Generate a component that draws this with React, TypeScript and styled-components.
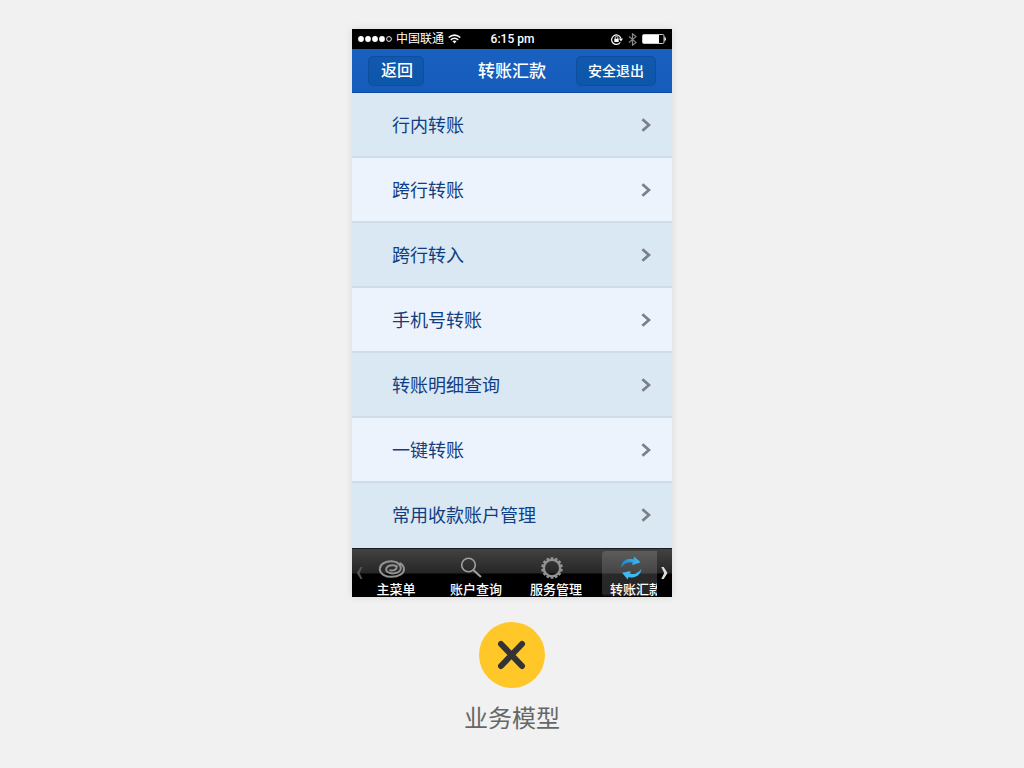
import React from "react";
import styled, { createGlobalStyle } from "styled-components";

const GlobalStyle = createGlobalStyle`
  * { box-sizing: border-box; }
  body {
    margin: 0;
    background: #f1f1f1;
    font-family: "Liberation Sans", "Noto Sans CJK SC", sans-serif;
  }
  button { font-family: inherit; border: 0; padding: 0; background: none; cursor: pointer; }
  svg { display: block; flex: none; }
`;

const Page = styled.main`
  min-height: 100vh;
  display: flex;
  flex-direction: column;
  align-items: center;
  padding: 29px 16px 24px;
`;

const Phone = styled.section`
  width: 100%;
  max-width: 320px;
  box-shadow: 0 0 8px rgba(0, 0, 0, 0.1);
`;

const StatusBar = styled.div`
  display: grid;
  grid-template-columns: 1fr auto 1fr;
  align-items: center;
  height: 20px;
  padding: 0 5px 0 6px;
  background: #000;
  color: #fff;
  font-size: 12px;
  line-height: 20px;
`;

const StatusGroup = styled.div<{ $end?: boolean }>`
  display: flex;
  align-items: center;
  gap: ${(p) => (p.$end ? "5px" : "4px")};
  justify-content: ${(p) => (p.$end ? "flex-end" : "flex-start")};
`;

const Clock = styled.time`
  font-family: Roboto, "Liberation Sans", sans-serif;
  font-weight: 500;
`;

const NavBar = styled.header`
  display: grid;
  grid-template-columns: 1fr auto 1fr;
  align-items: center;
  height: 44px;
  padding: 0 16px;
  background: linear-gradient(#1961c0, #155bbb);
  border-bottom: 1px solid #104a9c;
`;

const NavButton = styled.button<{ $end?: boolean }>`
  justify-self: ${(p) => (p.$end ? "end" : "start")};
  height: 30px;
  padding: 0 ${(p) => (p.$end ? "11px" : "10px")} 0 ${(p) => (p.$end ? "11px" : "12px")};
  border: 1px solid #0f4d9e;
  border-radius: 5px;
  background: linear-gradient(#1159b0, #0c57a8);
  color: #fff;
  font-size: ${(p) => (p.$end ? "14px" : "16px")};
  font-weight: 500;
  line-height: 28px;
`;

const Title = styled.h1`
  margin: 0;
  padding-top: 3px;
  color: #fff;
  font-size: 17px;
  font-weight: 500;
  line-height: 24px;
`;

const List = styled.ul`
  margin: 0;
  padding: 0;
  list-style: none;
`;

const Item = styled.li`
  background: #dae8f4;
  border-bottom: 2px solid #cfdcea;
  &:nth-child(even) { background: #ecf3fd; }
  &:last-child { border-bottom-color: #dae8f4; }
`;

const ItemButton = styled.button`
  display: flex;
  align-items: center;
  justify-content: space-between;
  width: 100%;
  height: 63px;
  padding: 0 21px 0 40px;
  color: #103e80;
  font-size: 18px;
  line-height: 24px;
`;

const ItemLabel = styled.span`
  padding-top: 2px;
`;

const TabBar = styled.nav`
  display: flex;
  height: 49px;
  border-top: 1px solid #1c1c1c;
  background: linear-gradient(#424242, #262626 24px, #000 25px, #000);
`;

const TabArrow = styled.button<{ $dim?: boolean }>`
  display: flex;
  align-items: center;
  justify-content: center;
  flex: none;
  width: 15px;
  color: ${(p) => (p.$dim ? "#555" : "#ddd")};
`;

const TabTrack = styled.div`
  display: flex;
  flex: 1;
  min-width: 0;
  gap: 12px;
  margin-left: -5px;
  overflow: hidden;
`;

const Tab = styled.button<{ $active?: boolean }>`
  display: flex;
  flex: none;
  flex-direction: column;
  align-items: center;
  width: 68px;
  margin-top: 2px;
  border-radius: 4px;
  color: #fff;
  font-size: 13px;
  font-weight: 500;
  line-height: 14px;
  white-space: nowrap;
  background: ${(p) => (p.$active ? "linear-gradient(#5c5c5c, #454545 22px, #292929 23px, #262626 43px, #000 46px)" : "none")};
`;

const TabIcon = styled.span`
  display: flex;
  align-items: center;
  height: 32px;
  padding: 2px 9px 0 0;
`;

const Verdict = styled.figure`
  display: flex;
  flex-direction: column;
  align-items: center;
  margin: 25px 0 0;
`;

const Badge = styled.div`
  display: flex;
  align-items: center;
  justify-content: center;
  width: 66px;
  height: 66px;
  border-radius: 50%;
  background: #ffc728;
`;

const Caption = styled.figcaption`
  margin-top: 13px;
  color: #666;
  font-size: 24px;
  line-height: 36px;
`;

const SignalIcon = () => (
  <svg width="34" height="8" viewBox="0 0 34 8" fill="#fff">
    {[3, 10, 17, 24].map((x) => <circle key={x} cx={x} cy="4" r="2.9" />)}
    <circle cx="31" cy="4" r="2.4" fill="none" stroke="#fff" strokeWidth="0.9" />
  </svg>
);

const WifiIcon = () => (
  <svg width="13" height="10" viewBox="0 0 13 10" fill="none" stroke="#fff" strokeWidth="1.6">
    <path d="M.7 3.5Q6.5-1.3 12.3 3.5M2.8 5.8Q6.5 2.7 10.2 5.8" />
    <path d="M4.5 7.3Q6.5 5.8 8.5 7.3L6.5 9.5Z" fill="#fff" stroke="none" />
  </svg>
);

const LockIcon = () => (
  <svg width="12" height="11" viewBox="0 0 12 11" fill="none" stroke="#fff">
    <path d="M9.3 8.2A4.7 4.7 0 1 1 9.8 4.2" strokeWidth="1.2" />
    <path d="M7.8 4.6h4.2L10 7.6z" fill="#fff" stroke="none" />
    <path d="M4.2 5V3.7a1.3 1.3 0 0 1 2.6 0V5" strokeWidth="0.9" />
    <path d="M3.3 4.8h4.4v3.2H3.3z" fill="#fff" stroke="none" />
  </svg>
);

const BluetoothIcon = () => (
  <svg width="9" height="13" viewBox="0 0 9 13" fill="none" stroke="#8a8a8a" strokeWidth="1.2">
    <path d="M1 3.5 8 9.4 4.5 12.2V.8L8 3.6 1 9.5" />
  </svg>
);

const BatteryIcon = () => (
  <svg width="25" height="10" viewBox="0 0 25 10">
    <rect x=".5" y=".5" width="21.5" height="9" rx="1.3" fill="none" stroke="#fff" strokeWidth=".8" />
    <path d="M1 1h16v8H1z" fill="#fff" />
    <path d="M22.5 2.5q3 2.5 0 5z" fill="#fff" />
  </svg>
);

const RowChevron = () => (
  <svg width="10" height="14" viewBox="0 0 10 14" fill="none" stroke="#7b8087" strokeWidth="2.8">
    <path d="M1.4 1.2 8 7 1.4 12.8" />
  </svg>
);

const ArrowIcon = ({ left }: { left?: boolean }) => (
  <svg width="7" height="12" viewBox="0 0 7 12" fill="currentColor">
    <path d={left ? "M6.5 0h-2L.8 6l3.7 6h2L3.6 6z" : "M.3 0h2.4l3.8 6-3.8 6H.3l2.9-6z"} />
  </svg>
);

const SwirlIcon = () => (
  <svg width="28" height="24" viewBox="0 0 28 24" fill="none" stroke="#929292" strokeLinecap="round">
    <path d="M12.2 14.2C15.500 15.200 19 13.500 18.600 10.300" strokeWidth="2" />
    <path
      d="M18.600 10.300C15 8 8.200 9.500 8.200 13.600 8.200 17.600 16.500 18.500 20.800 15.800 25 12.500 22 5.500 13.500 5.200 7 5.100 1.800 8.500 1.800 13 1.800 18 7.500 20.800 13.700 20.800 20.500 20.800 26 17.600 26 13.200 26 10.600 24.600 8.600 22.300 7.300"
      strokeWidth="2"
    />
  </svg>
);

const SearchIcon = () => (
  <svg width="24" height="22" viewBox="0 0 24 22" fill="none" stroke="#a0a0a0">
    <circle cx="8.5" cy="8" r="6.8" strokeWidth="1.6" />
    <path d="m13.3 13 7.7 7" strokeWidth="2" />
  </svg>
);

const GearIcon = () => (
  <svg width="22" height="22" viewBox="0 0 22 22" fill="none" stroke="#929292">
    <circle cx="11" cy="11" r="8.1" strokeWidth="2.2" />
    {Array.from({ length: 14 }, (_, i) => (
      <path key={i} d="M9.3 2.8 9.7.2h2.6l.4 2.600z" fill="#929292" stroke="none" transform={`rotate(${(i * 360) / 14} 11 11)`} />
    ))}
  </svg>
);

const TransferIcon = () => (
  <svg width="24" height="24" viewBox="0 0 24 24">
    <defs>
      <linearGradient id="transferBlue" x1="0" y1="0" x2="1" y2="0">
        <stop offset="0" stopColor="#1b86cf" />
        <stop offset="1" stopColor="#3cbcf8" />
      </linearGradient>
    </defs>
    <path d="M1.200 12C1 5 7 1.200 13.500 3.200L14.200.5 20.500 6.300l-8.500 2.900.7-2.700C7.500 5.200 3.500 7.500 1.200 12Z" fill="url(#transferBlue)" />
    <path d="M21.500 12.800C20.500 19.500 14.800 23 8.600 20.900L7.700 23.500 2 16.800l8.700-1.900-.8 2.700C14.500 19 18.500 17 21.500 12.800Z" fill="#3cb8f5" />
  </svg>
);

const CrossIcon = () => (
  <svg width="30" height="30" viewBox="0 0 30 30" stroke="#333" strokeWidth="6" strokeLinecap="round">
    <path d="m4 4 21 22M25 4 4 26" />
  </svg>
);

const services = ["行内转账", "跨行转账", "跨行转入", "手机号转账", "转账明细查询", "一键转账", "常用收款账户管理"];

const tabs = [
  { label: "主菜单", Icon: SwirlIcon },
  { label: "账户查询", Icon: SearchIcon },
  { label: "服务管理", Icon: GearIcon },
  { label: "转账汇款", Icon: TransferIcon, active: true },
];

export default function App() {
  return (
    <>
      <GlobalStyle />
      <Page lang="zh-CN">
        <Phone>
          <StatusBar>
            <StatusGroup><SignalIcon /><span>中国联通</span><WifiIcon /></StatusGroup>
            <Clock>6:15 pm</Clock>
            <StatusGroup $end><LockIcon /><BluetoothIcon /><BatteryIcon /></StatusGroup>
          </StatusBar>
          <NavBar>
            <NavButton>返回</NavButton>
            <Title>转账汇款</Title>
            <NavButton $end>安全退出</NavButton>
          </NavBar>
          <List>
            {services.map((name) => (
              <Item key={name}>
                <ItemButton><ItemLabel>{name}</ItemLabel><RowChevron /></ItemButton>
              </Item>
            ))}
          </List>
          <TabBar>
            <TabArrow $dim aria-label="向左"><ArrowIcon left /></TabArrow>
            <TabTrack>
              {tabs.map(({ label, Icon, active }) => (
                <Tab key={label} $active={active}>
                  <TabIcon><Icon /></TabIcon>
                  {label}
                </Tab>
              ))}
            </TabTrack>
            <TabArrow aria-label="向右"><ArrowIcon /></TabArrow>
          </TabBar>
        </Phone>
        <Verdict>
          <Badge><CrossIcon /></Badge>
          <Caption>业务模型</Caption>
        </Verdict>
      </Page>
    </>
  );
}
